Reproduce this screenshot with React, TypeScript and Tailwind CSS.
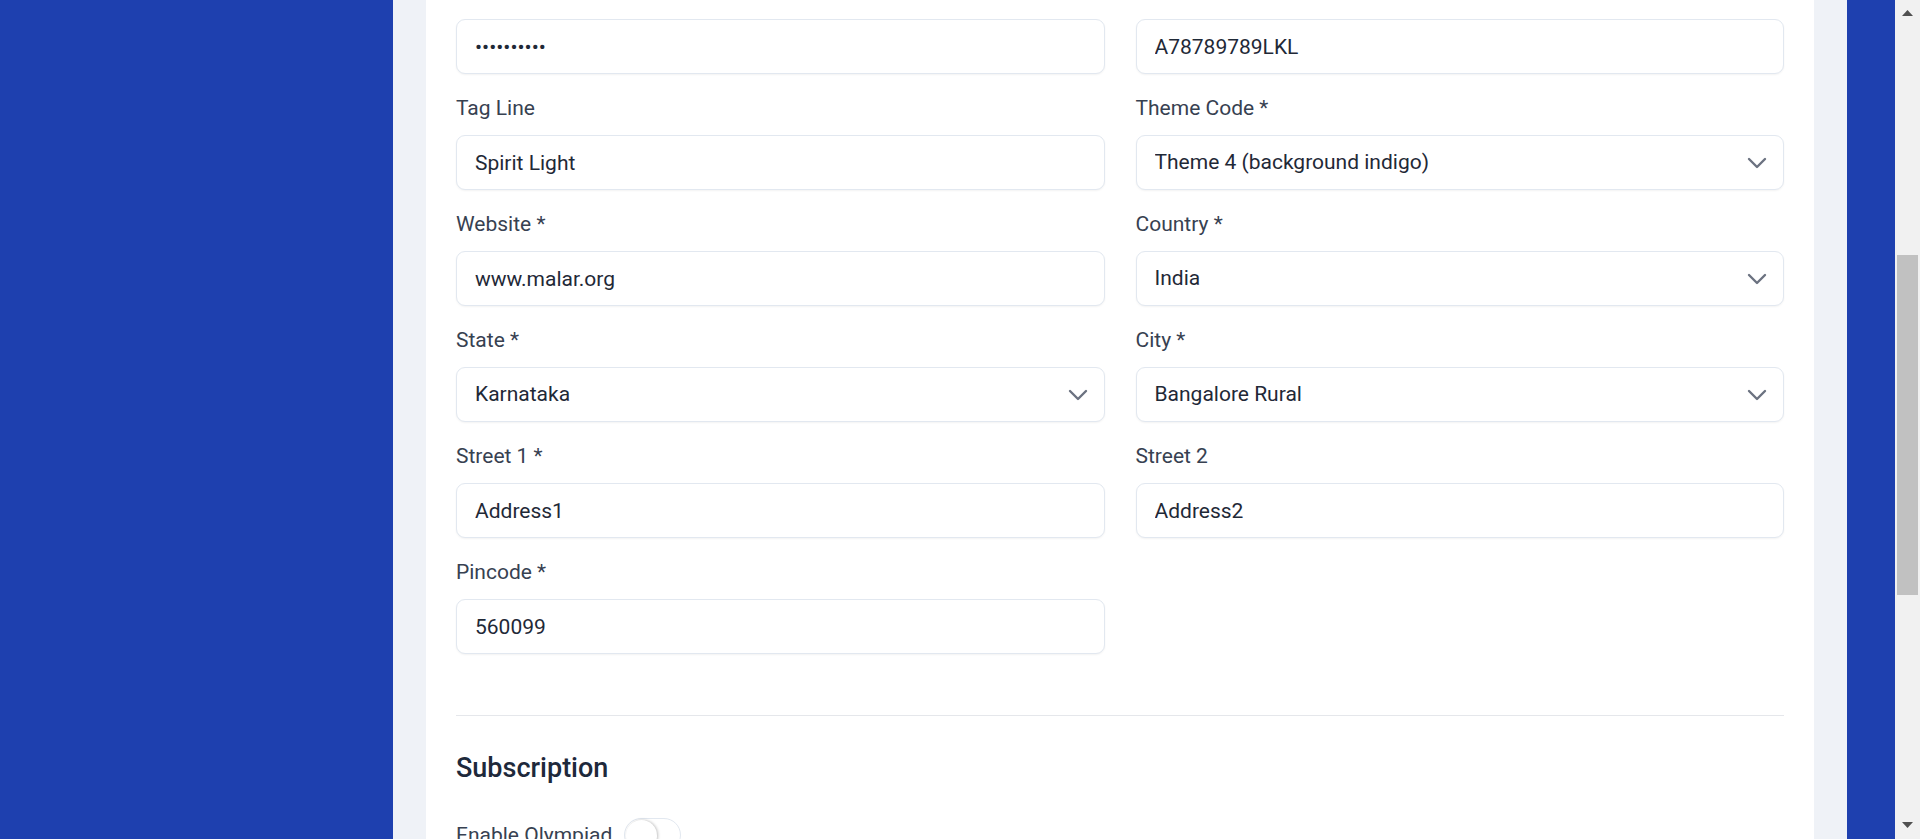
import React from 'react';

const inputClass =
  'block w-full h-[55px] rounded-[9px] border border-[#e2e8f0] bg-white pl-[18px] pr-[18px] text-[21px] text-[#1f2937] shadow-[0_1px_2px_0_rgba(0,0,0,0.05)] outline-none';

const Label: React.FC<{ text: string }> = ({ text }) => (
  <label className="block text-[21px] leading-7 mb-[13px] text-[#374151]">{text}</label>
);

const TextInput: React.FC<{ value: string; type?: string }> = ({ value, type = 'text' }) => (
  <input type={type} value={value} readOnly className={inputClass} />
);

const SelectInput: React.FC<{ value: string; options?: string[] }> = ({ value, options }) => (
  <div className="relative">
    <select value={value} onChange={() => {}} className={`${inputClass} appearance-none`}>
      {(options ?? [value]).map((o) => (
        <option key={o} value={o}>
          {o}
        </option>
      ))}
    </select>
    <svg
      className="pointer-events-none absolute right-[7px] top-1/2 -translate-y-1/2"
      width="40"
      height="40"
      viewBox="0 0 20 20"
      fill="none"
    >
      <path d="M6 8l4 4 4-4" stroke="#6b7280" strokeWidth="1.2" strokeLinecap="round" strokeLinejoin="round" />
    </svg>
  </div>
);

const Field: React.FC<{ label: string; children: React.ReactNode }> = ({ label, children }) => (
  <div>
    <Label text={label} />
    {children}
  </div>
);

export default function App() {
  return (
    <div
      className="flex h-[839px] w-[1920px] overflow-hidden"
      style={{ fontFamily: 'Roboto, "Noto Sans", sans-serif' }}
    >
      {/* Sidebar */}
      <div className="w-[393px] shrink-0 bg-[#1e40af]" />

      {/* Main */}
      <div className="w-[1454px] shrink-0 bg-[#eff2f7] px-[33px]">
        <div className="h-full bg-white px-[30px] pt-[19px]">
          <div className="grid grid-cols-2 gap-x-[31px] gap-y-[20px]">
            {/* Row 1 (labels scrolled out of view) */}
            <TextInput type="password" value="abcdefghij" />
            <TextInput value="A78789789LKL" />

            <Field label="Tag Line">
              <TextInput value="Spirit Light" />
            </Field>
            <Field label="Theme Code *">
              <SelectInput
                value="Theme 4 (background indigo)"
                options={[
                  'Theme 1 (background blue)',
                  'Theme 2 (background green)',
                  'Theme 3 (background purple)',
                  'Theme 4 (background indigo)',
                ]}
              />
            </Field>

            <Field label="Website *">
              <TextInput value="www.malar.org" />
            </Field>
            <Field label="Country *">
              <SelectInput value="India" />
            </Field>

            <Field label="State *">
              <SelectInput value="Karnataka" />
            </Field>
            <Field label="City *">
              <SelectInput value="Bangalore Rural" />
            </Field>

            <Field label="Street 1 *">
              <TextInput value="Address1" />
            </Field>
            <Field label="Street 2">
              <TextInput value="Address2" />
            </Field>

            <Field label="Pincode *">
              <TextInput value="560099" />
            </Field>
          </div>

          <div className="mt-[61px] h-px bg-[#e5e7eb]" />

          {/* Subscription */}
          <h2 className="mt-[34px] text-[27px] leading-9 font-medium text-[#1e293b]">Subscription</h2>
          <div className="mt-[32px] flex items-center gap-[12px]">
            <span className="text-[21px] leading-7 text-[#374151]">Enable Olympiad</span>
            <button className="flex h-[34px] w-[57px] items-center rounded-full border border-[#e2e8f0] bg-white p-px">
              <span className="h-[31px] w-[31px] rounded-full bg-white shadow-[1px_0_3px_rgba(0,0,0,0.25)]" />
            </button>
          </div>
        </div>
      </div>

      <div className="w-[48px] shrink-0 bg-[#1e40af]" />

      {/* Scrollbar */}
      <div className="flex w-[25px] shrink-0 flex-col items-center bg-[#f1f1f1]">
        <svg className="mt-[10px]" width="11" height="6" viewBox="0 0 11 6">
          <path d="M0 6 L5.5 0 L11 6 Z" fill="#505050" />
        </svg>
        <div className="mt-[239px] h-[340px] w-[21px] bg-[#c1c1c1]" />
        <div className="flex-1" />
        <svg className="mb-[11px]" width="11" height="6" viewBox="0 0 11 6">
          <path d="M0 0 L11 0 L5.5 6 Z" fill="#505050" />
        </svg>
      </div>
    </div>
  );
}
